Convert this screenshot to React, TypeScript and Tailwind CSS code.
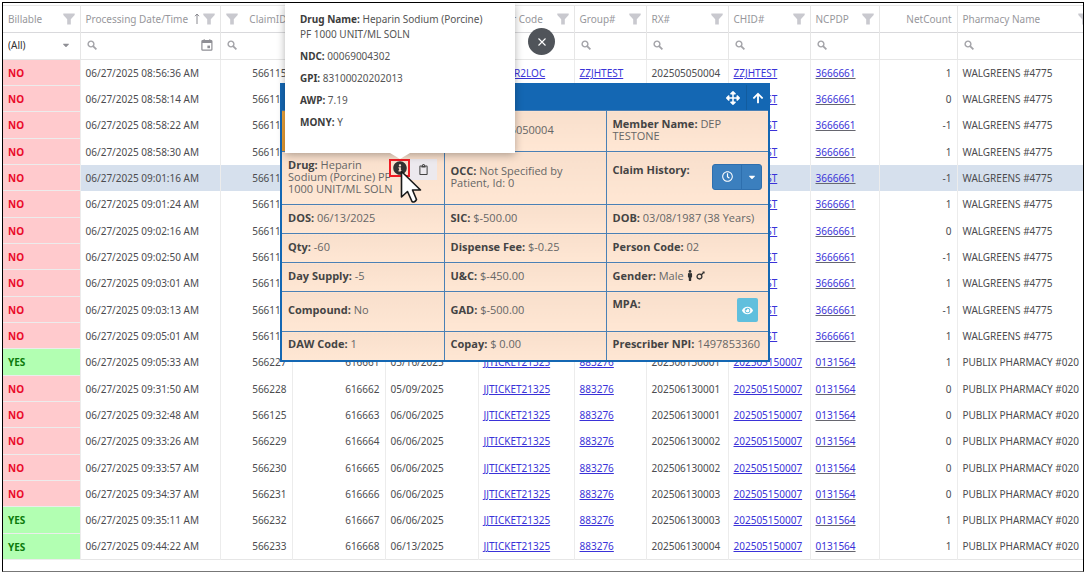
import React, { useState } from 'react';
import { FaArrowUp, FaArrowsAlt, FaCaretDown, FaEye, FaInfoCircle, FaMale, FaMars, FaRegClipboard, FaRegClock } from 'react-icons/fa';

type Column = {
    title: string;
    width: string;
    align?: 'right';
    filter?: boolean;
    sorted?: boolean;
    search?: 'select' | 'date' | 'text' | 'none';
};

type Row = {
    billable: 'YES' | 'NO';
    time: string;
    claim: string;
    auth: string;
    fill: string;
    carrier: string;
    group: string;
    rx: string;
    chid: string;
    ncpdp: string;
    net: number;
    pharmacy: string;
};

const columns: Column[] = [
    { title: 'Billable', width: 'w-[77px]', filter: true, search: 'select' },
    { title: 'Processing Date/Time', width: 'w-[140px]', filter: true, sorted: true, search: 'date' },
    { title: 'ClaimID', width: 'w-[72px]', align: 'right', filter: true, search: 'text' },
    { title: 'AuthNo', width: 'w-[93px]', align: 'right', filter: true, search: 'text' },
    { title: 'DOS', width: 'w-[93px]', filter: true, search: 'text' },
    { title: 'Carrier Code', width: 'w-[96px]', filter: true, search: 'text' },
    { title: 'Group#', width: 'w-[72px]', filter: true, search: 'text' },
    { title: 'RX#', width: 'w-[82px]', filter: true, search: 'text' },
    { title: 'CHID#', width: 'w-[82px]', filter: true, search: 'text' },
    { title: 'NCPDP', width: 'w-[69px]', filter: true, search: 'text' },
    { title: 'NetCount', width: 'w-[78px]', align: 'right', search: 'none' },
    { title: 'Pharmacy Name', width: 'w-[138px]', filter: true, search: 'text' },
];

const walgreens = (time: string, claim: string, net: number): Row => ({
    billable: 'NO',
    time,
    claim,
    auth: '616650',
    fill: '06/13/2025',
    carrier: 'CENTER2LOC',
    group: 'ZZJHTEST',
    rx: '202505050004',
    chid: 'ZZJHTEST',
    ncpdp: '3666661',
    net,
    pharmacy: 'WALGREENS #4775',
});

const publix = (billable: 'YES' | 'NO', time: string, claim: string, auth: string, fill: string, rx: string, net: number): Row => ({
    billable,
    time,
    claim,
    auth,
    fill,
    carrier: 'JJTICKET21325',
    group: '883276',
    rx,
    chid: '202505150007',
    ncpdp: '0131564',
    net,
    pharmacy: 'PUBLIX PHARMACY #020',
});

const rows: Row[] = [
    walgreens('08:56:36', '566115', 1),
    walgreens('08:58:14', '566116', 0),
    walgreens('08:58:22', '566116', -1),
    walgreens('08:58:30', '566117', 1),
    walgreens('09:01:16', '566117', -1),
    walgreens('09:01:24', '566118', 1),
    walgreens('09:02:16', '566118', 0),
    walgreens('09:02:50', '566118', -1),
    walgreens('09:03:01', '566119', 1),
    walgreens('09:03:13', '566119', -1),
    walgreens('09:05:01', '566119', 1),
    publix('YES', '09:05:33', '566227', '616661', '05/16/2025', '202506130001', 1),
    publix('NO', '09:31:50', '566228', '616662', '05/09/2025', '202506130001', 0),
    publix('NO', '09:32:48', '566125', '616663', '06/06/2025', '202506130001', 0),
    publix('NO', '09:33:26', '566229', '616664', '06/06/2025', '202506130002', 0),
    publix('NO', '09:33:57', '566230', '616665', '06/06/2025', '202506130002', 0),
    publix('NO', '09:34:37', '566231', '616666', '06/06/2025', '202506130003', 0),
    publix('YES', '09:35:11', '566232', '616667', '06/06/2025', '202506130003', 1),
    publix('YES', '09:44:22', '566233', '616668', '06/13/2025', '202506130004', 1),
];

const FilterIcon = () => (
    <svg viewBox="0 0 12 12" className="size-3 fill-[#c9c9cf]">
        <path d="M0.3 0.5h11.4v1.6L7.8 6.2v5.3H4.2V6.2L0.3 2.1z" />
    </svg>
);

const SearchIcon = () => (
    <svg viewBox="0 0 10 10" className="size-[10px] shrink-0 fill-none stroke-[#a3a3a8]" strokeWidth="1.4">
        <circle cx="4" cy="4" r="2.9" />
        <path d="M6.1 6.1L9.4 9.4" strokeWidth="1.8" />
    </svg>
);

const CalendarIcon = () => (
    <svg viewBox="0 0 12 12" className="size-3 fill-none stroke-[#8f8f95]" strokeWidth="1.2">
        <rect x="0.9" y="1.6" width="10" height="9.6" rx="0.8" />
        <path d="M1 3h10" strokeWidth="2" />
        <path d="M3.2 0.2v2M8.8 0.2v2" />
        <rect x="6.4" y="6.6" width="2.6" height="2.6" fill="#8f8f95" stroke="none" />
    </svg>
);

const HeaderCell = ({ column }: { column: Column }) => (
    <th className="border-r border-[#e6e6e6] px-[5px] font-normal text-[#97979c]">
        <div className={`flex items-center justify-between ${column.align === 'right' ? 'flex-row-reverse' : ''}`}>
            <span>{column.title}</span>
            <span className="flex items-center">
                {column.sorted && (
                    <svg viewBox="0 0 6 12" className="mr-[3px] h-3 w-[6px] fill-none stroke-[#8a8a90]">
                        <path d="M3 11V1M1 3.2L3 1l2 2.2" />
                    </svg>
                )}
                {column.filter && (
                    <button aria-label={`Filter ${column.title}`}>
                        <FilterIcon />
                    </button>
                )}
            </span>
        </div>
    </th>
);

const SearchCell = ({ column }: { column: Column }) => {
    if (column.search === 'none') {
        return <td className="border-r border-[#e6e6e6]" />;
    }
    if (column.search === 'select') {
        return (
            <td className="border-r border-[#e6e6e6] px-[5px] pb-[2px]">
                <div className="relative flex items-center">
                    <select aria-label={column.title} className="w-full appearance-none text-[#333]">
                        <option>(All)</option>
                    </select>
                    <FaCaretDown className="pointer-events-none absolute right-1 size-[10px] text-[#8f8f95]" />
                </div>
            </td>
        );
    }
    return (
        <td className="border-r border-[#e6e6e6] px-[6px] pb-[2px]">
            <div className="flex items-center gap-1">
                <SearchIcon />
                <input aria-label={column.title} className="w-full min-w-0 outline-none" />
                {column.search === 'date' && (
                    <button aria-label="Pick a date" className="mr-px">
                        <CalendarIcon />
                    </button>
                )}
            </div>
        </td>
    );
};

const Link = ({ children, className = '' }: { children: React.ReactNode; className?: string }) => (
    <a href="#" className={`text-[#3a32d8] underline ${className}`}>
        {children}
    </a>
);

const ClaimsGrid = ({ selected, onSelect }: { selected: number; onSelect: (index: number) => void }) => (
    <table className="w-full min-w-[1092px] table-fixed border-collapse whitespace-nowrap border-y border-[#e6e6e6] text-left text-[10px] leading-[14px] text-[#4c4c4f]">
        <colgroup>
            {columns.map((column) => (
                <col key={column.title} className={column.width} />
            ))}
        </colgroup>
        <thead>
            <tr className="h-[27px] border-b border-[#d9d9dc]">
                {columns.map((column) => (
                    <HeaderCell key={column.title} column={column} />
                ))}
            </tr>
            <tr className="h-[27px] border-b border-[#e6e6e6]">
                {columns.map((column) => (
                    <SearchCell key={column.title} column={column} />
                ))}
            </tr>
        </thead>
        <tbody className="[&>tr:nth-child(3n)]:h-[27px] [&_td]:border-r [&_td]:border-[#ececec] [&_td]:px-[5px]">
            {rows.map((row, i) => (
                <tr key={row.time} onClick={() => onSelect(i)} className={`h-[26px] ${i === selected ? 'bg-[#d6e0ed]' : ''}`}>
                    <td
                        className={`border-b font-bold ${
                            row.billable === 'YES' ? 'border-b-[#dcf5dc] bg-[#b2ffb2] text-[#0c7a0c]' : 'border-b-[#fbe6e8] bg-[#ffcacd] text-[#ea0a2a]'
                        }`}
                    >
                        {row.billable}
                    </td>
                    <td>06/27/2025 {row.time} AM</td>
                    <td className="text-right">{row.claim}</td>
                    <td className="text-right">{row.auth}</td>
                    <td>{row.fill}</td>
                    <td><Link>{row.carrier}</Link></td>
                    <td><Link>{row.group}</Link></td>
                    <td>{row.rx}</td>
                    <td><Link>{row.chid}</Link></td>
                    <td><Link className="decoration-[#66666f]">{row.ncpdp}</Link></td>
                    <td className="text-right">{row.net}</td>
                    <td>{row.pharmacy}</td>
                </tr>
            ))}
        </tbody>
    </table>
);

const Field = ({ label, children }: { label: string; children?: React.ReactNode }) => (
    <span>
        <b className="font-bold text-[#444]">{label}:</b> {children}
    </span>
);

const ClaimPanel = () => (
    <section className="absolute left-[277px] top-[80px] w-[490px] border-2 border-[#1467b3] bg-[#1467b3] font-['Open_Sans',sans-serif] text-[11px] leading-[12px] text-[#666]">
        <header className="flex h-[25px] items-center justify-end text-white">
            <button aria-label="Move" className="flex h-full w-[26px] items-center justify-center">
                <FaArrowsAlt className="size-[14px]" />
            </button>
            <button aria-label="Collapse" className="flex h-full w-[22px] items-center justify-center border-l border-[#125c9f]">
                <FaArrowUp className="size-3" />
            </button>
        </header>
        <table className="w-full table-fixed border-collapse [&_td]:border [&_td]:border-[#4a80b5] [&_td]:bg-linear-to-b [&_td]:from-[#f8dfcc] [&_td]:to-[#ffe7d4] [&_td]:px-[6px] [&_td]:pb-[3px] [&_tr>td:first-child]:border-l-0 [&_tr>td:last-child]:border-r-0 [&_tr:last-child>td]:border-b-0">
            <tbody>
                <tr className="h-[41px]">
                    <td className="from-[#eda43c]! to-[#e79a31]!" />
                    <td><Field label="RX#">202505050004</Field></td>
                    <td><Field label="Member Name">DEP TESTONE</Field></td>
                </tr>
                <tr className="h-[53px]">
                    <td>
                        <div className="flex items-start">
                            <div className="w-[101px] whitespace-nowrap">
                                <Field label="Drug">Heparin<br />Sodium (Porcine) PF<br />1000 UNIT/ML SOLN</Field>
                            </div>
                            <button aria-label="Drug details" className="flex h-[18px] w-[21px] shrink-0 items-center justify-center border-2 border-[#f01c24]">
                                <FaInfoCircle className="size-[14px] shrink-0 text-[#333]" />
                            </button>
                            <button aria-label="Copy" className="flex h-[21px] w-[27px] shrink-0 items-center justify-center bg-[#ece9ee]">
                                <FaRegClipboard className="size-[11px] text-[#444]" />
                            </button>
                        </div>
                    </td>
                    <td><Field label="OCC">Not Specified by Patient, Id: 0</Field></td>
                    <td>
                        <div className="flex items-start justify-between">
                            <Field label="Claim History" />
                            <div className="flex h-[26px] rounded-[3px] border border-[#2e6fae] bg-[#3b7fbe] text-white">
                                <button aria-label="Claim history" className="flex w-[29px] items-center justify-center border-r border-[#2e6fae]">
                                    <FaRegClock className="size-[11px]" />
                                </button>
                                <button aria-label="More" className="flex w-[19px] items-center justify-center">
                                    <FaCaretDown className="size-[10px]" />
                                </button>
                            </div>
                        </div>
                    </td>
                </tr>
                <tr className="h-[29px]">
                    <td><Field label="DOS">06/13/2025</Field></td>
                    <td><Field label="SIC">$-500.00</Field></td>
                    <td><Field label="DOB">03/08/1987 (38 Years)</Field></td>
                </tr>
                <tr className="h-[29px]">
                    <td><Field label="Qty">-60</Field></td>
                    <td><Field label="Dispense Fee">$-0.25</Field></td>
                    <td><Field label="Person Code">02</Field></td>
                </tr>
                <tr className="h-[29px]">
                    <td><Field label="Day Supply">-5</Field></td>
                    <td><Field label="U&amp;C">$-450.00</Field></td>
                    <td>
                        <div className="flex items-center gap-[3px]">
                            <Field label="Gender">Male</Field>
                            <span className="flex items-center text-[#333]">
                                <FaMale className="h-[11px] w-[6px]" />
                                <FaMars className="ml-[2px] size-[11px]" />
                            </span>
                        </div>
                    </td>
                </tr>
                <tr className="h-[40px]">
                    <td><Field label="Compound">No</Field></td>
                    <td><Field label="GAD">$-500.00</Field></td>
                    <td>
                        <div className="flex items-start justify-between pr-1">
                            <Field label="MPA" />
                            <button aria-label="View MPA" className="flex h-[24px] w-[21px] items-center justify-center rounded-[2px] bg-[#60bfdd] text-white">
                                <FaEye className="size-[11px]" />
                            </button>
                        </div>
                    </td>
                </tr>
                <tr className="h-[28px]">
                    <td><Field label="DAW Code">1</Field></td>
                    <td><Field label="Copay">$ 0.00</Field></td>
                    <td><Field label="Prescriber NPI">1497853360</Field></td>
                </tr>
            </tbody>
        </table>
    </section>
);

const DrugTooltip = () => (
    <div role="tooltip" className="absolute left-[282px] top-0 h-[150px] w-[230px] bg-white pl-[15px] pr-[25px] pt-[9px] text-[10px] leading-[15px] text-[#555] shadow-[0_2px_8px_rgba(0,0,0,0.3)]">
        <div className="flex flex-col gap-[7px] [&_b]:text-[#3c3c3c]">
            <p><b>Drug Name:</b> Heparin Sodium (Porcine) PF 1000 UNIT/ML SOLN</p>
            <p><b>NDC:</b> 00069004302</p>
            <p><b>GPI:</b> 83100020202013</p>
            <p><b>AWP:</b> 7.19</p>
            <p><b>MONY:</b> Y</p>
        </div>
        <svg viewBox="0 0 20 6" className="absolute left-[105px] top-full h-[6px] w-5 fill-white">
            <path d="M0 0h20L10 6z" />
        </svg>
    </div>
);

const Cursor = () => (
    <svg viewBox="0 0 22 34" className="pointer-events-none absolute left-[397px] top-[167px] h-[34px] w-[22px]">
        <path d="M1.5 1.5V27L7.5 21.5L12 31.5Q14.5 33 16.5 29.5L12.5 20H20.5z" fill="#fff" stroke="#1a1a1a" strokeWidth="1.6" strokeLinejoin="round" />
    </svg>
);

const App: React.FC = () => {
    const [selected, setSelected] = useState(4);
    const [tooltipOpen, setTooltipOpen] = useState(true);

    return (
        <div className="h-screen bg-white px-0.5 pb-1 pt-0.5 font-['Noto_Sans',sans-serif]">
            <main className="relative h-full overflow-hidden border border-black border-b-[#777] pt-0.5">
                <ClaimsGrid selected={selected} onSelect={setSelected} />
                <ClaimPanel />
                {tooltipOpen && <DrugTooltip />}
                <button
                    aria-label="Close"
                    onClick={() => setTooltipOpen(false)}
                    className="absolute left-[525px] top-[25px] flex size-[27px] items-center justify-center rounded-full bg-[#50545a]"
                >
                    <svg viewBox="0 0 8 8" className="size-2 stroke-white" strokeWidth="1.1">
                        <path d="M0.5 0.5l7 7M7.5 0.5l-7 7" />
                    </svg>
                </button>
                <Cursor />
            </main>
        </div>
    );
};

export default App;
